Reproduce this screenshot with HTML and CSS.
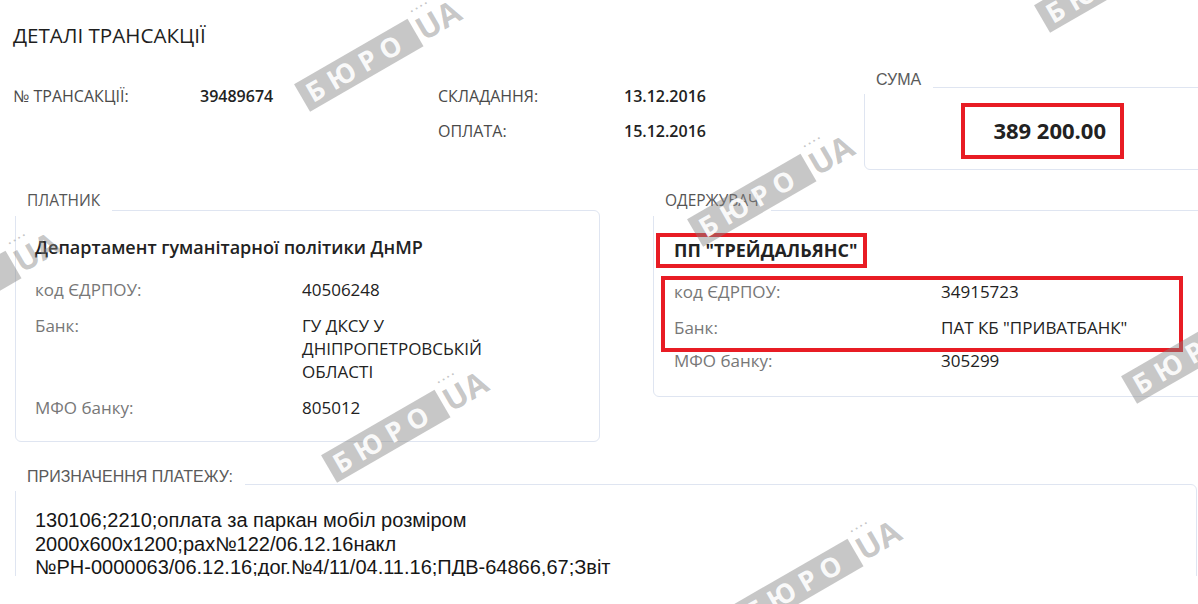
FILE: index.html
```html
<!DOCTYPE html>
<html lang="uk">
<head>
<meta charset="utf-8">
<title>Деталі трансакції</title>
<link rel="stylesheet" href="styles.css">
</head>
<body>
<div class="page">
  <h1 class="title">ДЕТАЛІ ТРАНСАКЦІЇ</h1>

  <div class="top">
    <div class="meta">
      <span class="meta-label">№ ТРАНСАКЦІЇ:</span>
      <span class="meta-value">39489674</span>
      <span class="meta-label">СКЛАДАННЯ:</span>
      <span class="meta-value">13.12.2016</span>
      <span></span>
      <span></span>
      <span class="meta-label">ОПЛАТА:</span>
      <span class="meta-value">15.12.2016</span>
    </div>
    <section class="box sum">
      <span class="legend legend-arial">СУМА</span>
      <div class="sum-mark">389 200.00</div>
    </section>
  </div>

  <div class="parties">
    <section class="box party payer">
      <span class="legend">ПЛАТНИК</span>
      <div class="party-name">Департамент гуманітарної політики ДнМР</div>
      <div class="rows">
        <div class="row"><span class="label">код ЄДРПОУ:</span><span class="value">40506248</span></div>
        <div class="row"><span class="label">Банк:</span><span class="value">ГУ ДКСУ У ДНІПРОПЕТРОВСЬКІЙ ОБЛАСТІ</span></div>
        <div class="row"><span class="label">МФО банку:</span><span class="value">805012</span></div>
      </div>
    </section>

    <section class="box party payee">
      <span class="legend">ОДЕРЖУВАЧ</span>
      <div class="party-name name-mark">ПП "ТРЕЙДАЛЬЯНС"</div>
      <div class="rows rows-mark">
        <div class="row"><span class="label">код ЄДРПОУ:</span><span class="value">34915723</span></div>
        <div class="row"><span class="label">Банк:</span><span class="value">ПАТ КБ "ПРИВАТБАНК"</span></div>
      </div>
      <div class="row row-after-mark"><span class="label">МФО банку:</span><span class="value">305299</span></div>
    </section>
  </div>

  <div class="purpose-clip">
    <section class="box purpose">
      <span class="legend legend-arial">ПРИЗНАЧЕННЯ ПЛАТЕЖУ:</span>
      <p class="purpose-text"><span class="line">130106;2210;оплата за паркан мобіл розміром</span> <span class="line">2000x600x1200;рах№122/06.12.16накл</span> <span class="line">№РН-0000063/06.12.16;дог.№4/11/04.11.16;ПДВ-64866,67;Звіт</span></p>
    </section>
  </div>

  <div class="wm wm1"><span class="wm-band">БЮРО</span><span class="wm-ua"><span class="wm-dots">····</span>UA</span></div>
  <div class="wm wm2"><span class="wm-band">БЮРО</span><span class="wm-ua"><span class="wm-dots">····</span>UA</span></div>
  <div class="wm wm3"><span class="wm-band">БЮРО</span><span class="wm-ua"><span class="wm-dots">····</span>UA</span></div>
  <div class="wm wm4"><span class="wm-band">БЮРО</span><span class="wm-ua"><span class="wm-dots">····</span>UA</span></div>
  <div class="wm wm5"><span class="wm-band">БЮРО</span><span class="wm-ua"><span class="wm-dots">····</span>UA</span></div>
  <div class="wm wm6"><span class="wm-band">БЮРО</span><span class="wm-ua"><span class="wm-dots">····</span>UA</span></div>
  <div class="wm wm7"><span class="wm-band">БЮРО</span><span class="wm-ua"><span class="wm-dots">····</span>UA</span></div>
  <div class="wm wm8"><span class="wm-band">БЮРО</span><span class="wm-ua"><span class="wm-dots">····</span>UA</span></div>
</div>
</body>
</html>
```

FILE: styles.css
```css
html, body {
  margin: 0;
  padding: 0;
  background: #ffffff;
}
body {
  width: 1198px;
  height: 604px;
  overflow: hidden;
  font-family: "Open Sans", "Liberation Sans", sans-serif;
  color: #222;
}
.page {
  position: relative;
  width: 1280px;
  height: 604px;
  padding-left: 13px;
  box-sizing: border-box;
}
.title {
  margin: 0;
  padding-top: 21px;
  font-size: 20.6px;
  line-height: 28px;
  font-weight: 400;
  color: #1e1e1e;
}

/* header meta + sum */
.top {
  display: flex;
  align-items: flex-start;
  margin-top: 37px;
}
.meta {
  display: grid;
  grid-template-columns: 187px 238px 186px 240px;
  row-gap: 14px;
  font-size: 16px;
  line-height: 21px;
}
.meta-label {
  color: #4a4a4a;
}
.meta-value {
  color: #222;
  font-weight: 600;
}

.box {
  position: relative;
  border: 1px solid #dfe5f1;
  border-radius: 6px;
  box-sizing: border-box;
}
.legend {
  position: absolute;
  left: -1px;
  top: -21px;
  padding: 0 12px 6px 12px;
  background: #fff;
  font-size: 15.5px;
  line-height: 20px;
  color: #555;
}
.legend-arial {
  top: -18px;
  padding-bottom: 4px;
  font-family: "Liberation Sans", Arial, sans-serif;
  font-size: 16px;
  color: #5a5a5a;
}

.sum {
  margin-top: 1px;
  width: 380px;
  height: 83px;
  padding: 15px 0 0 96px;
}
.sum-mark {
  width: 163px;
  height: 56px;
  box-sizing: border-box;
  border: 4px solid #e81c24;
  padding-right: 14px;
  text-align: right;
  font-size: 22px;
  line-height: 46px;
  font-weight: 700;
  color: #222;
}

/* parties */
.parties {
  display: flex;
  gap: 53px;
  margin-top: 40px;
  padding-left: 2px;
  align-items: flex-start;
}
.party {
  font-size: 17px;
  line-height: 23px;
}
.payer {
  width: 585px;
  height: 232px;
  padding: 25px 20px 0 19px;
}
.payee {
  width: 600px;
  height: 187px;
  padding: 22px 20px 0 20px;
}
.party-name {
  font-size: 18px;
  font-weight: 600;
  color: #222;
  margin-bottom: 19px;
}
.rows {
  display: flex;
  flex-direction: column;
  gap: 13px;
}
.row {
  display: grid;
  grid-template-columns: 267px 250px;
}
.label {
  color: #777;
}
.value {
  color: #222;
}

.name-mark {
  width: fit-content;
  margin-left: -18px;
  margin-bottom: 0;
  padding: 0 6px 0 14px;
  border: 4px solid #e81c24;
  font-weight: 700;
  line-height: 27px;
}
.rows-mark {
  position: relative;
  z-index: 1;
  width: 522px;
  box-sizing: border-box;
  margin-top: 8px;
  margin-left: -13px;
  padding: 0 0 9px 9px;
  border: 4px solid #e81c24;
}
.row-after-mark {
  margin-top: -3px;
}

/* purpose */
.purpose-clip {
  margin-top: 20px;
  padding-top: 22px;
  padding-left: 2px;
  height: 114px;
  box-sizing: border-box;
  overflow: hidden;
}
.purpose {
  width: 1182px;
  height: 200px;
  padding: 24px 20px 0 19px;
}
.purpose-text {
  margin: 0;
  font-family: "Liberation Sans", Arial, sans-serif;
  font-size: 20px;
  line-height: 23.5px;
  color: #161616;
}
.line {
  display: block;
  white-space: nowrap;
}

/* watermarks */
.wm {
  position: absolute;
  z-index: 5;
  display: flex;
  align-items: stretch;
  width: 180px;
  height: 32px;
  transform: rotate(-30deg);
  pointer-events: none;
  font-family: "Open Sans", "Liberation Sans", sans-serif;
  font-weight: 700;
}
.wm-band {
  width: 134px;
  box-sizing: border-box;
  padding-left: 7px;
  background: rgba(130, 130, 130, 0.45);
  color: rgba(255, 255, 255, 0.92);
  font-size: 27px;
  line-height: 32px;
  letter-spacing: 7px;
}
.wm-ua {
  position: relative;
  padding-left: 3px;
  color: rgba(130, 130, 130, 0.45);
  font-size: 32px;
  line-height: 32px;
  letter-spacing: 0;
}
.wm-dots {
  position: absolute;
  left: 6px;
  top: -10px;
  font-size: 12px;
  line-height: 12px;
  letter-spacing: 2px;
}
.wm1 { left: 290px; top: 37px; }
.wm2 { left: 1030px; top: -42px; }
.wm3 { left: 683px; top: 172px; }
.wm4 { left: -112px; top: 269px; }
.wm5 { left: 317px; top: 408px; }
.wm6 { left: 1117px; top: 329px; }
.wm7 { left: 730px; top: 557px; }
.wm8 { left: -96px; top: 642px; }
```
